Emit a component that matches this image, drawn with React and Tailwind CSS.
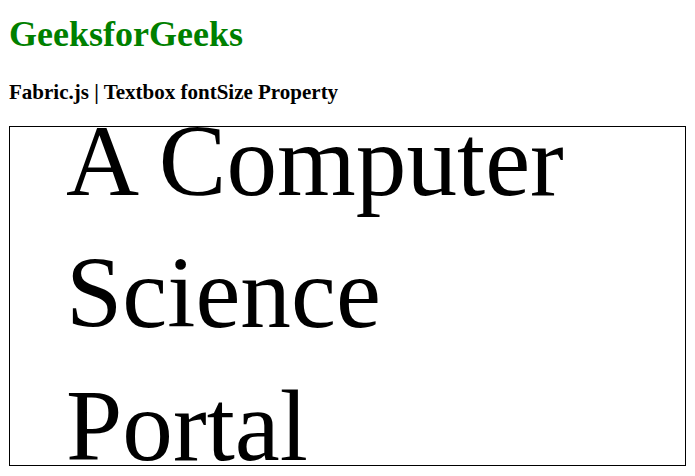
import React from 'react';

const serif = { fontFamily: '"Liberation Serif", "Times New Roman", serif' };

export default function App() {
  const lines = ['A Computer', 'Science', 'Portal'];

  return (
    <div className="min-h-screen bg-white px-[9px] pt-[14px] text-black" style={serif}>
      <h1 className="text-[36px] font-bold leading-[40px] text-[#008000]">GeeksforGeeks</h1>
      <h3 className="mt-[26px] text-[21px] font-bold leading-[24px]">
        Fabric.js | Textbox fontSize Property
      </h3>

      <div className="mt-[22px] h-[340px] w-[677px] overflow-hidden border border-black bg-white">
        <div className="-mt-[32.5px] pl-[56px] text-[101.25px] leading-[132.7px] text-black">
          {lines.map((line) => (
            <div key={line} className="whitespace-nowrap">
              {line}
            </div>
          ))}
        </div>
      </div>
    </div>
  );
}
